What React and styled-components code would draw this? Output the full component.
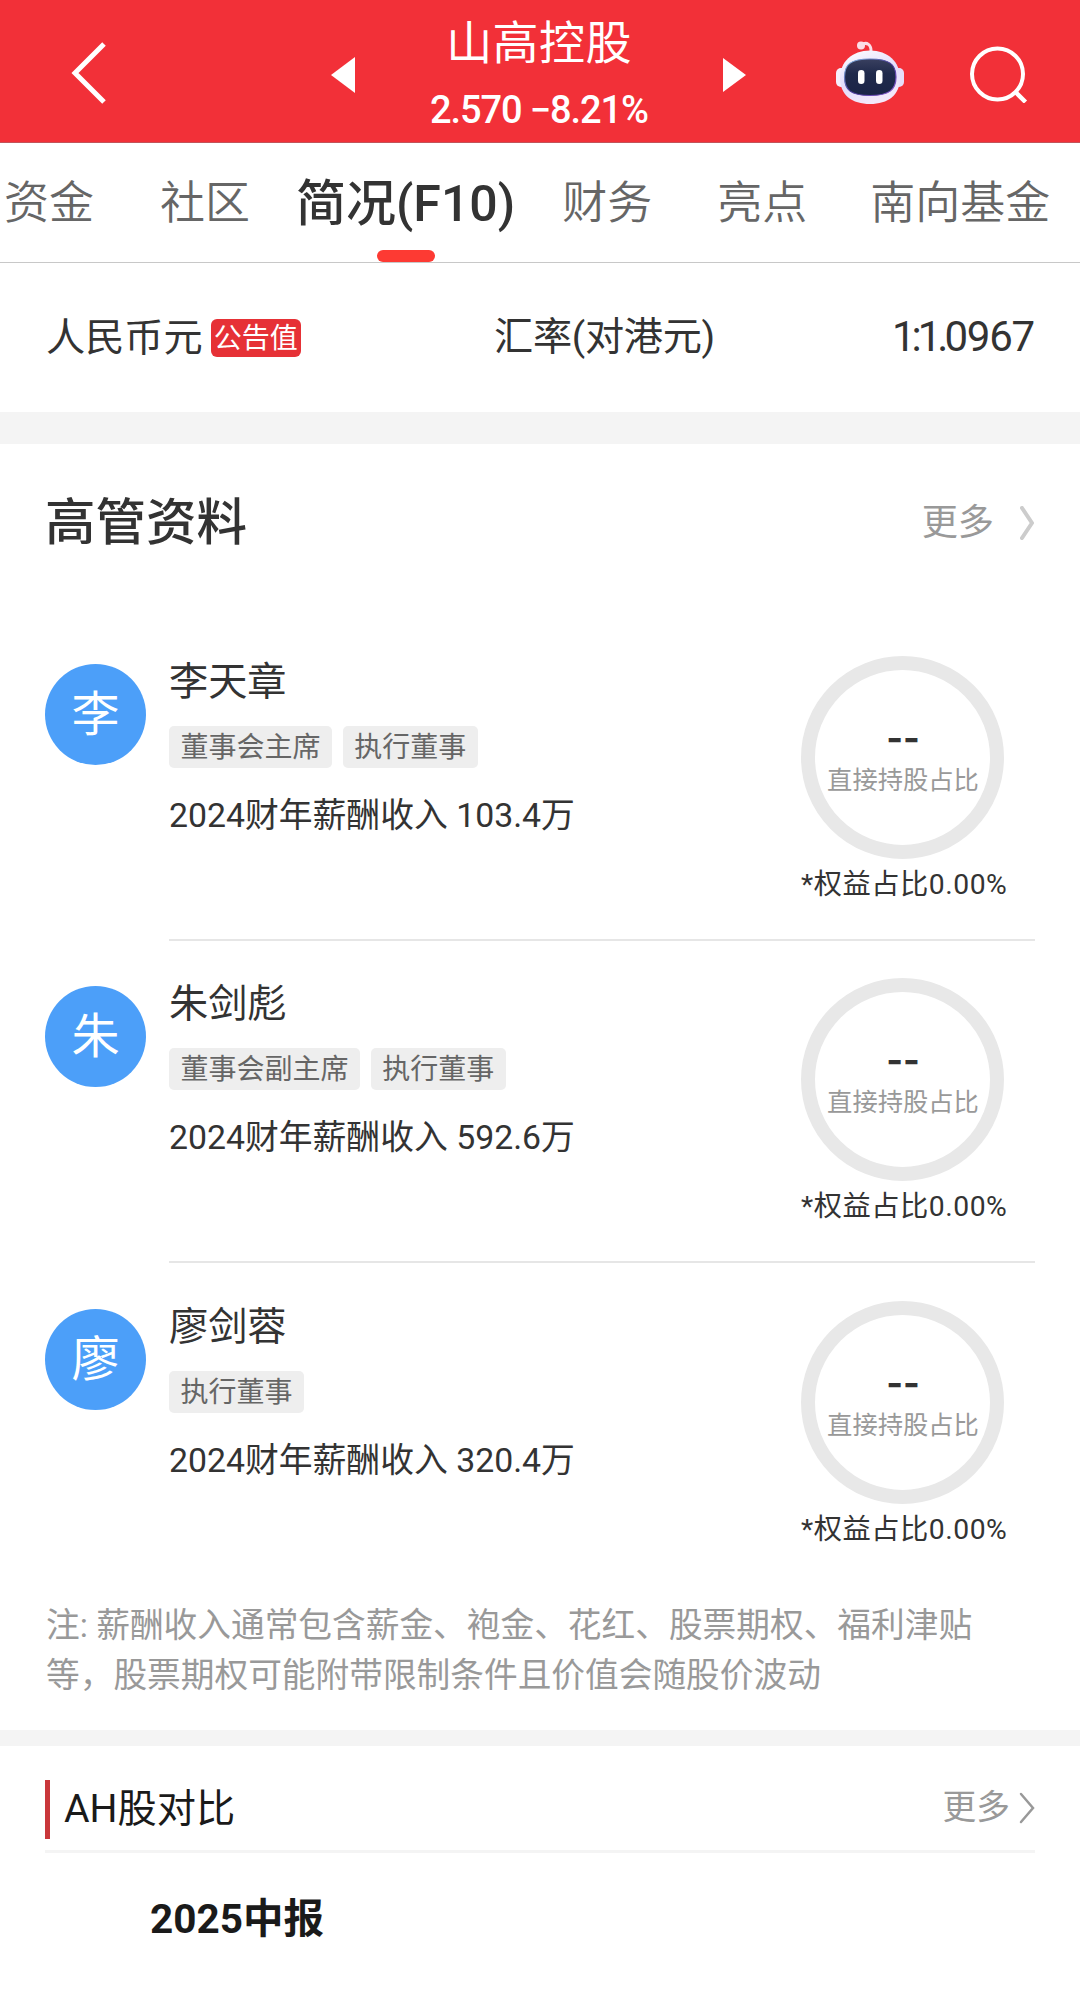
import React, { useState } from 'react';
import styled, { createGlobalStyle } from 'styled-components';

const GlobalStyle = createGlobalStyle`
  * {
    box-sizing: border-box;
  }
  body {
    margin: 0;
    background: #fff;
    font-family: Roboto, 'Noto Sans CJK SC', sans-serif;
    color: #333;
  }
`;

const Page = styled.div`
  width: 1080px;
  height: 1992px;
  overflow: hidden;
  display: flex;
  flex-direction: column;
  white-space: nowrap;
`;

const TopBar = styled.header`
  height: 143px;
  flex-shrink: 0;
  display: flex;
  align-items: center;
  padding: 4px 51px 0 68px;
  background: #f23038;
  border-bottom: 1px solid #c1545a;
  color: #fff;

  svg {
    flex-shrink: 0;
  }
`;

const StockNav = styled.div`
  display: flex;
  align-items: center;
  justify-content: space-between;
  width: 416px;
  margin-left: 221px;
  padding-top: 4px;
`;

const StockInfo = styled.div`
  display: flex;
  flex-direction: column;
  align-items: center;
  padding-top: 1px;
`;

const StockName = styled.div`
  font-size: 46px;
  line-height: 60px;
  letter-spacing: 0.4px;
  font-weight: 400;
`;

const StockPrice = styled.div`
  font-size: 38px;
  line-height: 56px;
  font-weight: 500;
  letter-spacing: -1.1px;
  margin-top: 9px;
`;

const Actions = styled.div`
  display: flex;
  align-items: center;
  gap: 65px;
  margin-left: auto;
`;

const TabBar = styled.nav`
  height: 120px;
  flex-shrink: 0;
  display: flex;
  gap: 65px;
  padding-left: 4px;
  border-bottom: 1px solid #c8c8c8;
`;

const Tab = styled.div`
  display: flex;
  flex-direction: column;
  align-items: center;
  flex-shrink: 0;
  padding-top: 3px;
  margin: ${(props) => (props.$active ? '0 -18px -0px -19px' : '0')};
  font-size: ${(props) => (props.$active ? '50px' : '45px')};
  font-weight: ${(props) => (props.$active ? 500 : 350)};
  line-height: 116px;
  color: ${(props) => (props.$active ? '#333' : '#666')};
  cursor: pointer;

  &:nth-child(2) {
    margin-left: 1px;
  }

  &:last-child {
    margin-left: -2px;
  }

  &::after {
    content: '';
    display: ${(props) => (props.$active ? 'block' : 'none')};
    width: 58px;
    height: 12px;
    margin-top: -12px;
    border-radius: 6px;
    background: #fd3a33;
  }
`;

const RateRow = styled.section`
  height: 149px;
  flex-shrink: 0;
  display: grid;
  grid-template-columns: 448px 1fr auto;
  padding: 0 46px;
  font-size: 39.2px;
  line-height: 148px;
`;

const Currency = styled.div`
  display: flex;
  align-items: center;
  gap: 8px;
`;

const CurrencyPair = styled.div`
  letter-spacing: -0.3px;
`;

const NoticeBadge = styled.span`
  width: 90px;
  height: 38px;
  line-height: 39px;
  border-radius: 6px;
  background: #e63136;
  color: #fff;
  font-size: 28px;
  text-align: center;
`;

const Rate = styled.div`
  font-size: 42px;
  letter-spacing: -1.2px;
`;

const RateBase = styled.span`
  letter-spacing: -4px;
`;

const Band = styled.div`
  height: ${(props) => props.$height}px;
  flex-shrink: 0;
  background: #f4f4f4;
`;

const Section = styled.section`
  flex-shrink: 0;
  padding: 0 45px;
`;

const SectionHeader = styled.div`
  height: 176px;
  display: flex;
  align-items: center;
  justify-content: space-between;
  padding: 0 1px 18px 0;
`;

const SectionTitle = styled.h2`
  margin: 0;
  font-size: 50.5px;
  font-weight: 500;
  line-height: 60px;
`;

const More = styled.div`
  display: flex;
  align-items: center;
  gap: ${(props) => props.$gap}px;
  font-size: ${(props) => props.$size}px;
  line-height: 50px;
  color: #999;
  cursor: pointer;
`;

const PersonRow = styled.div`
  height: 322.4px;
  display: flex;
  align-items: flex-start;
`;

const Avatar = styled.div`
  width: 101px;
  height: 101px;
  margin-top: 44px;
  border-radius: 50%;
  background: #4c9ff9;
  color: #fff;
  font-size: 48px;
  line-height: 102px;
  text-align: center;
`;

const PersonBody = styled.div`
  flex: 1;
  height: 321px;
  margin-left: 23px;
  display: flex;
  justify-content: space-between;
  border-bottom: 2px solid ${(props) => (props.$last ? 'transparent' : '#e6e6e6')};
`;

const PersonInfo = styled.div`
  padding-top: 38px;
`;

const PersonName = styled.div`
  font-size: 39.2px;
  line-height: 49px;
`;

const TagList = styled.div`
  display: flex;
  gap: 11px;
  margin-top: 19px;
`;

const Tag = styled.span`
  height: 42px;
  padding: 0 11.4px;
  border-radius: 5px;
  background: #eee;
  color: #666;
  font-size: 28px;
  line-height: 43px;
`;

const Salary = styled.div`
  margin-top: 23px;
  font-size: 33.8px;
  line-height: 49px;
`;

const Holding = styled.div`
  width: 205px;
  margin-right: 29px;
  padding-top: 36px;
  display: flex;
  flex-direction: column;
`;

const Ring = styled.div`
  width: 203px;
  height: 203px;
  display: flex;
  flex-direction: column;
  align-items: center;
  padding-left: 1px;
  border: 14px solid #e8e8e8;
  border-radius: 50%;
`;

const RingValue = styled.div`
  margin-top: 46px;
  font-family: Inter, sans-serif;
  font-size: 36px;
  font-weight: 700;
  line-height: 44px;
`;

const RingLabel = styled.div`
  margin-top: 3px;
  font-size: 25.3px;
  line-height: 35px;
  color: #999;
`;

const Equity = styled.div`
  margin-top: 8px;
  font-size: 28.3px;
  line-height: 36px;
  letter-spacing: 0.5px;
`;

const Note = styled.p`
  margin: 0;
  padding: 14px 0 0 1px;
  height: 142.8px;
  font-size: 33.7px;
  line-height: 50px;
  color: #999;
`;

const CompareHeader = styled.div`
  height: 107px;
  display: flex;
  align-items: center;
  justify-content: space-between;
  padding-top: 23px;
  border-bottom: 3px solid #f4f4f4;

  ${More} {
    margin-top: -3px;
  }
`;

const CompareTitle = styled.h3`
  margin: 0;
  padding-left: 14px;
  border-left: 5px solid #c9373b;
  font-size: 39.2px;
  font-weight: 400;
  line-height: 59px;
  color: #1a1a1a;
`;

const ReportName = styled.div`
  padding: 37px 0 0 105px;
  font-size: 40.5px;
  font-weight: 700;
  line-height: 58px;
  color: #1a1a1a;
`;

const BackIcon = () => (
  <svg width="42" height="64" viewBox="0 0 42 64" fill="none">
    <path d="M36 3 7 32 36 61" stroke="#fff" strokeWidth="5" />
  </svg>
);

const PrevIcon = () => (
  <svg width="24" height="36" viewBox="0 0 24 36">
    <path d="M24 0V36L0 18Z" fill="#fff" />
  </svg>
);

const NextIcon = () => (
  <svg width="24" height="36" viewBox="0 0 24 36">
    <path d="M0 1V35L23 18Z" fill="#fff" />
  </svg>
);

const RobotIcon = () => (
  <svg width="68" height="66" viewBox="0 0 68 66" fill="none">
    <defs>
      <linearGradient id="shell" x1="0" y1="0" x2="0.4" y2="1">
        <stop offset="0" stopColor="#fff" />
        <stop offset="0.6" stopColor="#e2dcfb" />
        <stop offset="1" stopColor="#f3e8fa" />
      </linearGradient>
      <linearGradient id="rim" x1="0" y1="0" x2="1" y2="1">
        <stop offset="0" stopColor="#8bc4ea" />
        <stop offset="0.5" stopColor="#4a3a9a" />
        <stop offset="1" stopColor="#8a5ad0" />
      </linearGradient>
      <linearGradient id="visor" x1="0" y1="0" x2="0" y2="1">
        <stop offset="0" stopColor="#39405f" />
        <stop offset="0.4" stopColor="#202a4c" />
        <stop offset="1" stopColor="#1b2446" />
      </linearGradient>
    </defs>
    <path d="M25 5C31 1 35.500 5 35 12" stroke="#fbdde6" strokeWidth="3" />
    <circle cx="25" cy="5.500" r="4" fill="#fbdde6" />
    <rect x="0" y="28" width="12" height="19" rx="5" fill="#f6effc" />
    <rect x="56" y="28" width="12" height="19" rx="5" fill="#e6def9" />
    <path
      d="M34 10.500C52 10.500 64 22 64 38C64 55 52 64 34 64C16 64 4 55 4 38C4 22 16 10.500 34 10.500Z"
      fill="url(#shell)"
    />
    <path
      d="M34 19C53 19 60 24 60 37C60 50 53 55.500 34 55.500C15 55.500 8.500 50 8.500 37C8.500 24 15 19 34 19Z"
      fill="url(#visor)"
      stroke="url(#rim)"
      strokeWidth="1.200"
    />
    <rect x="22" y="30" width="6.500" height="14" rx="3.250" fill="#fff" />
    <rect x="40" y="30" width="6.500" height="14" rx="3.250" fill="#fff" />
  </svg>
);

const SearchIcon = () => (
  <svg width="60" height="60" viewBox="0 0 60 60" fill="none" stroke="#fff">
    <circle cx="28.500" cy="31" r="25.500" strokeWidth="4" />
    <path d="M46.500 49 56.500 59" strokeWidth="4.500" />
  </svg>
);

const ChevronIcon = ({ width, height, color, stroke }) => (
  <svg width={width} height={height} viewBox={`0 0 ${width} ${height}`} fill="none">
    <path
      d={`M2 2 ${width - 2} ${height / 2} 2 ${height - 2}`}
      stroke={color}
      strokeWidth={stroke}
      strokeLinecap="round"
    />
  </svg>
);

const tabs = ['资金', '社区', '简况(F10)', '财务', '亮点', '南向基金'];

const executives = [
  { name: '李天章', tags: ['董事会主席', '执行董事'], salary: '103.4万' },
  { name: '朱剑彪', tags: ['董事会副主席', '执行董事'], salary: '592.6万' },
  { name: '廖剑蓉', tags: ['执行董事'], salary: '320.4万' },
];

const Executive = ({ person, last }) => (
  <PersonRow>
    <Avatar>{person.name[0]}</Avatar>
    <PersonBody $last={last}>
      <PersonInfo>
        <PersonName>{person.name}</PersonName>
        <TagList>
          {person.tags.map((tag) => (
            <Tag key={tag}>{tag}</Tag>
          ))}
        </TagList>
        <Salary>2024财年薪酬收入 {person.salary}</Salary>
      </PersonInfo>
      <Holding>
        <Ring>
          <RingValue>--</RingValue>
          <RingLabel>直接持股占比</RingLabel>
        </Ring>
        <Equity>*权益占比0.00%</Equity>
      </Holding>
    </PersonBody>
  </PersonRow>
);

const App = () => {
  const [activeTab, setActiveTab] = useState('简况(F10)');

  return (
    <Page>
      <GlobalStyle />
      <TopBar>
        <BackIcon />
        <StockNav>
          <PrevIcon />
          <StockInfo>
            <StockName>山高控股</StockName>
            <StockPrice>2.570 −8.21%</StockPrice>
          </StockInfo>
          <NextIcon />
        </StockNav>
        <Actions>
          <RobotIcon />
          <SearchIcon />
        </Actions>
      </TopBar>
      <TabBar>
        {tabs.map((tab) => (
          <Tab key={tab} $active={tab === activeTab} onClick={() => setActiveTab(tab)}>
            {tab}
          </Tab>
        ))}
      </TabBar>
      <RateRow>
        <Currency>
          人民币元
          <NoticeBadge>公告值</NoticeBadge>
        </Currency>
        <CurrencyPair>汇率(对港元)</CurrencyPair>
        <Rate>
          <RateBase>1:1.</RateBase>0967
        </Rate>
      </RateRow>
      <Band $height={32} />
      <Section>
        <SectionHeader>
          <SectionTitle>高管资料</SectionTitle>
          <More $size={36.2} $gap={26}>
            更多
            <ChevronIcon width={14} height={34} color="#ccc" stroke={4} />
          </More>
        </SectionHeader>
        {executives.map((person, i) => (
          <Executive key={person.name} person={person} last={i === executives.length - 1} />
        ))}
        <Note>
          注: 薪酬收入通常包含薪金、袍金、花红、股票期权、福利津贴
          <br />
          等，股票期权可能附带限制条件且价值会随股价波动
        </Note>
      </Section>
      <Band $height={16} />
      <Section>
        <CompareHeader>
          <CompareTitle>AH股对比</CompareTitle>
          <More $size={33.7} $gap={9}>
            更多
            <ChevronIcon width={16} height={32} color="#999" stroke={2.5} />
          </More>
        </CompareHeader>
        <ReportName>2025中报</ReportName>
      </Section>
    </Page>
  );
};

export default App;
